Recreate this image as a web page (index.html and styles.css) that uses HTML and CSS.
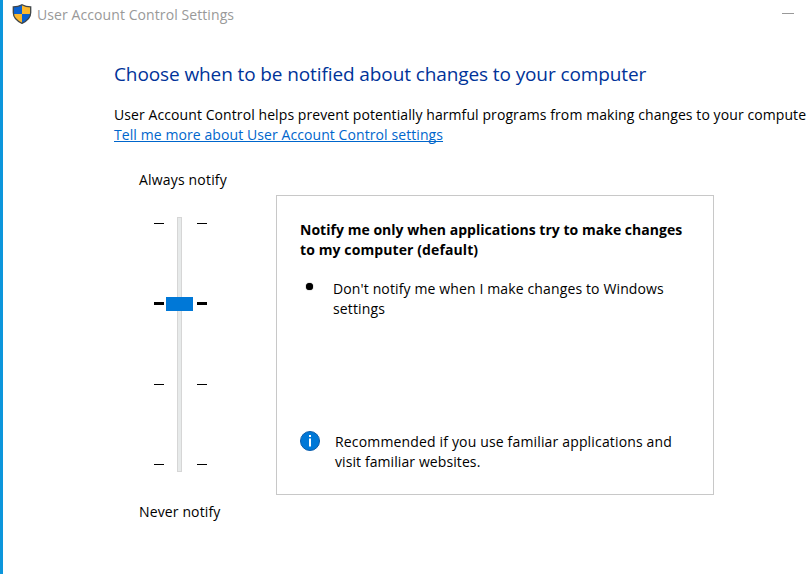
FILE: index.html
```html
<!DOCTYPE html>
<html lang="en">
<head>
<meta charset="utf-8">
<title>User Account Control Settings</title>
<link rel="stylesheet" href="styles.css">
</head>
<body>
<div class="window">
  <header class="titlebar">
    <svg class="shield" width="20" height="20" viewBox="0 0 20 20">
      <clipPath id="s"><path d="M10 .7C7.400 2.200 4.400 2.900 1.300 2.900V8.500C1.300 13.500 5 17 10 19.300C15 17 18.700 13.500 18.700 8.500V2.900C15.600 2.900 12.600 2.200 10 .7Z"/></clipPath>
      <g clip-path="url(#s)">
        <path d="M0 0H10V10H0Z" fill="#0b62d0"/>
        <path d="M10 0H20V10H10Z" fill="#fdb92e"/>
        <path d="M0 10H10V20H0Z" fill="#fdb92e"/>
        <path d="M10 10H20V20H10Z" fill="#0b62d0"/>
      </g>
      <path d="M10 .7C7.400 2.200 4.400 2.900 1.300 2.900V8.500C1.300 13.500 5 17 10 19.300C15 17 18.700 13.500 18.700 8.500V2.900C15.600 2.900 12.600 2.200 10 .7Z" fill="none" stroke="#3f4549" stroke-width="1.300"/>
    </svg>
    <span class="caption">User Account Control Settings</span>
    <span class="minimize"></span>
  </header>
  <main class="content">
    <h1>Choose when to be notified about changes to your computer</h1>
    <p class="intro">User Account Control helps prevent potentially harmful programs from making changes to your compute</p>
    <a class="more">Tell me more about User Account Control settings</a>
    <div class="settings">
      <section class="level">
        <div class="label always">Always notify</div>
        <div class="slider">
          <div class="ticks"><i></i><i class="current"></i><i></i><i></i></div>
          <div class="track"><div class="rail"></div><div class="thumb"></div></div>
          <div class="ticks"><i></i><i class="current"></i><i></i><i></i></div>
        </div>
        <div class="label never">Never notify</div>
      </section>
      <section class="card">
        <h2>Notify me only when applications try to make changes<br><span class="h2b">to my computer (default)</span></h2>
        <div class="item">
          <span class="bullet"></span>
          <p>Don't notify me when I make changes to Windows<br>settings</p>
        </div>
        <div class="note">
          <svg class="info" width="20" height="20" viewBox="0 0 20 20">
            <circle cx="10" cy="10" r="9.500" fill="#0078d7" stroke="#0b5cab"/>
            <path d="M9 4H11V6H9ZM9 7.500H11V15.500H9Z" fill="#fff"/>
          </svg>
          <p>Recommended if you use familiar applications and<br><span class="n2">visit familiar websites.</span></p>
        </div>
      </section>
    </div>
  </main>
</div>
</body>
</html>
```
FILE: styles.css
```css
* { box-sizing: border-box; margin: 0; padding: 0; }
body {
  background: #fff;
  color: #000;
  font: 14px/20px "Open Sans", "Noto Sans", sans-serif;
  letter-spacing: .085px;
  overflow: hidden;
}
.window {
  width: 807px;
  height: 574px;
  border-left: 3px solid #0c96dc;
  overflow: hidden;
  white-space: nowrap;
}
.titlebar { display: flex; align-items: flex-start; height: 30px; padding: 4px 13px 0 9px; }
.caption { margin-left: 5px; line-height: 22px; color: #999; }
.minimize { width: 12px; height: 1px; margin: 9px 0 0 auto; background: #999; }
.content { padding-left: 111px; }
h1 { margin-top: 31px; font-size: 19px; line-height: 26px; font-weight: 400; letter-spacing: -.105px; color: #003399; }
.intro { margin-top: 18px; }
.more { display: block; width: max-content; color: #0066cc; text-decoration: underline; text-underline-offset: 1px; text-decoration-thickness: 1px; text-decoration-skip-ink: none; }
.settings { display: flex; margin-top: 25px; }
.level { width: 162px; padding-left: 25px; }
.always { letter-spacing: .18px; }
.slider { display: grid; grid-template-columns: 10px 27px 12px; column-gap: 2px; margin: 27px 0 0 15px; height: 255px; }
.ticks { display: flex; flex-direction: column; padding-top: 6px; }
.ticks i { width: 10px; height: 1px; background: #000; margin-bottom: 79px; }
.ticks i:first-child { margin-bottom: 78px; }
.ticks .current { height: 3px; }
.ticks:last-child { padding-left: 2px; }
.track { position: relative; display: flex; justify-content: center; }
.rail { width: 5px; height: 255px; border: 1px solid #d6d6d6; background: #e7eaea; }
.thumb { position: absolute; left: 0; top: 80px; width: 27px; height: 14px; background: #0078d7; }
.never { margin-top: 30px; letter-spacing: .13px; }
.card { display: flex; flex-direction: column; width: 438px; height: 300px; margin-top: 25px; padding: 24px 23px 22px; border: 1px solid #c8c8c8; }
h2 { font-size: 14px; line-height: 20px; font-weight: 700; letter-spacing: .03px; }
.h2b { letter-spacing: .1px; }
.item { display: flex; margin-top: 19px; letter-spacing: .13px; }
.bullet { width: 7px; height: 7px; margin: 4px 20px 0 6px; border-radius: 50%; background: #000; box-shadow: 0 0 1px #000; }
.note { display: flex; gap: 15px; margin-top: auto; letter-spacing: .16px; }
.info { margin-top: -1px; }
.n2 { letter-spacing: .09px; }
```
